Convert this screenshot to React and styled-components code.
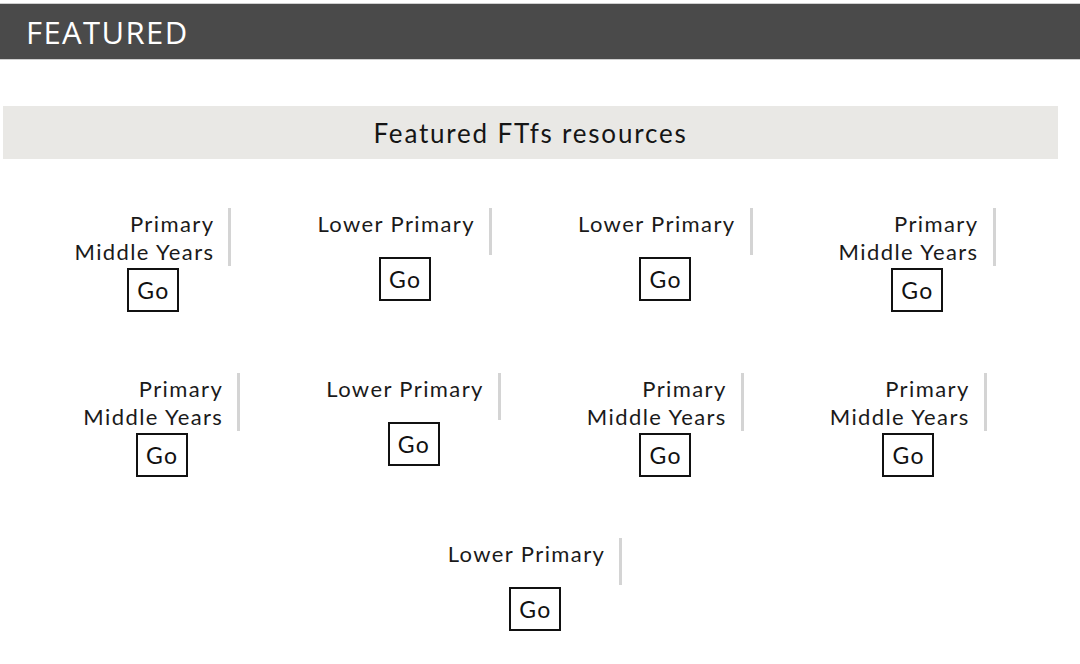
import styled, { createGlobalStyle } from "styled-components";

const resources = [
  ["Primary", "Middle Years"],
  ["Lower Primary"],
  ["Lower Primary"],
  ["Primary", "Middle Years"],
  ["Primary", "Middle Years"],
  ["Lower Primary"],
  ["Primary", "Middle Years"],
  ["Primary", "Middle Years"],
  ["Lower Primary"],
];

export default function App() {
  return (
    <>
      <GlobalStyle />
      <Header>FEATURED</Header>
      <Banner>Featured FTfs resources</Banner>
      <Grid>
        {resources.map((levels, index) => (
          <Item key={index}>
            <Levels>
              {levels.map((level) => (
                <div key={level}>{level}</div>
              ))}
            </Levels>
            <GoButton type="button">Go</GoButton>
          </Item>
        ))}
      </Grid>
    </>
  );
}

const GlobalStyle = createGlobalStyle`
  body {
    margin: 0;
    background: #ffffff;
    font-family: Lato, "Noto Sans", sans-serif;
    color: #1a1a1a;
  }
`;

const Header = styled.header`
  margin-top: 3px;
  height: 57px;
  display: flex;
  align-items: center;
  padding-left: 26px;
  background-color: #4a4a4a;
  border-top: 1px solid #cfcfcf;
  border-bottom: 1px solid #cfcfcf;
  box-sizing: border-box;
  color: #ffffff;
  font-family: "Open Sans", sans-serif;
  font-size: 31px;
  letter-spacing: 1.4px;
`;

const Banner = styled.div`
  margin: 46px 22px 0 3px;
  height: 53px;
  display: flex;
  align-items: center;
  justify-content: center;
  background-color: #e9e8e5;
  font-size: 26px;
  letter-spacing: 1.8px;
  color: #151515;
`;

const Grid = styled.div`
  display: flex;
  flex-wrap: wrap;
  justify-content: center;
  row-gap: 61px;
  margin: 49px 10px 0 0;
`;

const Item = styled.div`
  display: flex;
  flex-direction: column;
  align-items: center;
  margin: 0 43px;
`;

const Levels = styled.div`
  align-self: stretch;
  min-height: 45px;
  padding: 2px 14px 0 0;
  border-right: 3px solid #d4d4d4;
  text-align: right;
  font-size: 22px;
  line-height: 28px;
  letter-spacing: 1.4px;
`;

const GoButton = styled.button`
  margin-top: 2px;
  width: 52px;
  height: 44px;
  padding: 0 0 0 1px;
  background: #ffffff;
  border: 2px solid #111111;
  font-family: inherit;
  font-size: 23px;
  letter-spacing: 1.4px;
  color: #111111;
`;
